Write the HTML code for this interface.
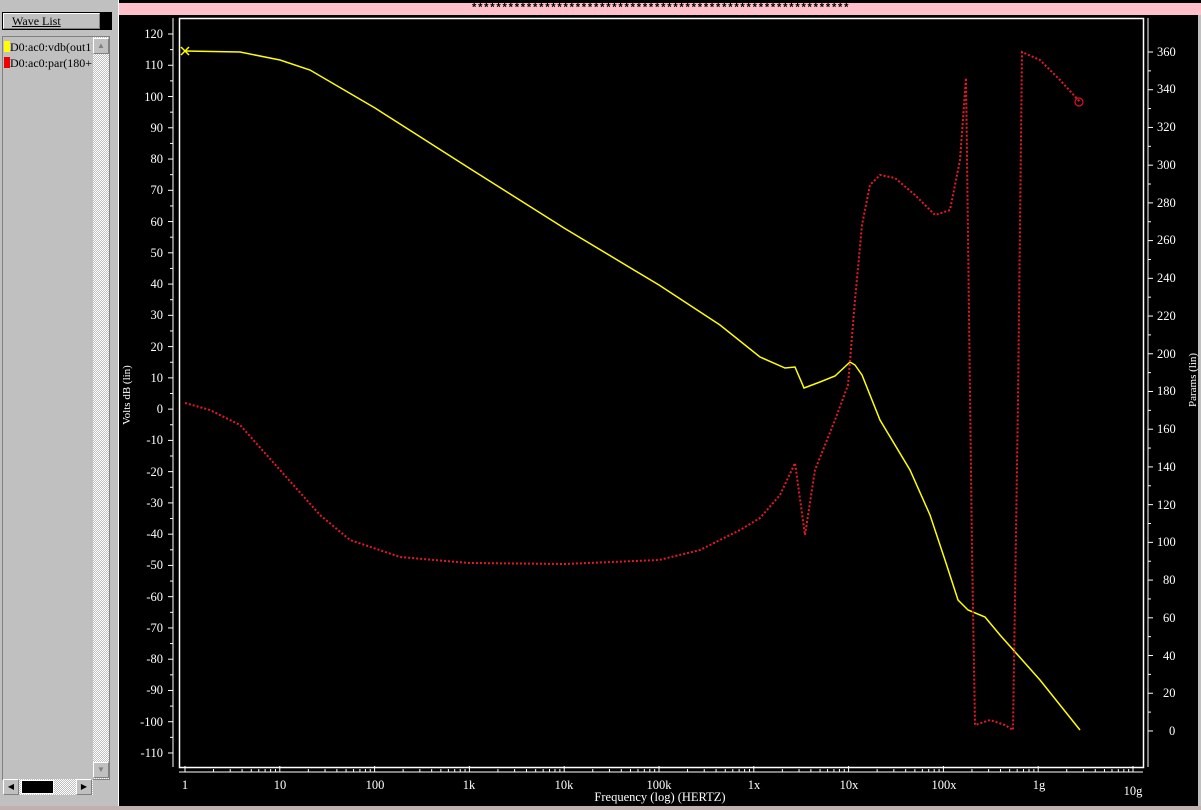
<!DOCTYPE html>
<html><head><meta charset="utf-8"><style>
body{margin:0;width:1201px;height:810px;overflow:hidden;background:#000;font-family:"Liberation Serif",serif;position:relative}
.lp{position:absolute;left:0;top:0;width:118px;height:806px;background:#c0c0c0;border-right:1px solid #fff}
.pk{position:absolute;left:119px;top:3px;width:1082px;height:12px;background:#ffc0cb;font:bold 11px "Liberation Mono",monospace;text-align:center;line-height:12px;color:#000;letter-spacing:-0.5px}
</style></head><body>
<div class="lp">
 <div style="position:absolute;left:2px;top:12px;width:110px;height:18px;background:#000"></div>
 <div style="position:absolute;left:3px;top:13px;width:97px;height:16px;background:#c0c0c0;border:1px solid #fff;border-right-color:#808080;border-bottom-color:#808080;box-sizing:border-box;font-size:12px;line-height:15px;padding-left:8px;text-decoration:underline">Wave List</div>
 <div style="position:absolute;left:2px;top:36px;width:108px;height:744px;background:#c0c0c0;border:1px solid #808080;box-sizing:border-box"></div>
 <div style="position:absolute;left:93px;top:37px;width:16px;height:742px;background:repeating-conic-gradient(#c0c0c0 0 25%,#fff 0 50%) 0 0/2px 2px"></div>
 <div style="position:absolute;left:93px;top:38px;width:16px;height:16px;background:#c0c0c0;border:1px solid #fff;border-right-color:#808080;border-bottom-color:#808080;box-sizing:border-box;font-size:8px;color:#808080;text-align:center;line-height:14px">▲</div>
 <div style="position:absolute;left:93px;top:762px;width:16px;height:16px;background:#c0c0c0;border:1px solid #fff;border-right-color:#808080;border-bottom-color:#808080;box-sizing:border-box;font-size:8px;color:#808080;text-align:center;line-height:14px">▼</div>
 <div style="position:absolute;left:4px;top:39px;width:88px;height:16px;font-size:12px;line-height:16px;white-space:nowrap;overflow:hidden"><span style="display:inline-block;width:6px;height:11px;background:#ff0;vertical-align:-1px"></span>D0:ac0:vdb(out1)</div>
 <div style="position:absolute;left:4px;top:55px;width:88px;height:16px;font-size:12px;line-height:16px;white-space:nowrap;overflow:hidden"><span style="display:inline-block;width:6px;height:11px;background:#e00;vertical-align:-1px"></span>D0:ac0:par(180+v</div>
 <div style="position:absolute;left:3px;top:779px;width:90px;height:16px;background:repeating-conic-gradient(#c0c0c0 0 25%,#fff 0 50%) 0 0/2px 2px"></div>
 <div style="position:absolute;left:3px;top:779px;width:16px;height:16px;background:#c0c0c0;border:1px solid #fff;border-right-color:#808080;border-bottom-color:#808080;box-sizing:border-box;font-size:8px;text-align:center;line-height:14px">◀</div>
 <div style="position:absolute;left:21px;top:780px;width:33px;height:14px;background:#000;border:1px solid #fff;box-sizing:border-box"></div>
 <div style="position:absolute;left:76px;top:779px;width:16px;height:16px;background:#c0c0c0;border:1px solid #fff;border-right-color:#808080;border-bottom-color:#808080;box-sizing:border-box;font-size:8px;text-align:center;line-height:14px">▶</div>
</div>
<div class="pk">**************************************************************</div>
<div style="position:absolute;left:1198px;top:15px;width:3px;height:795px;background:#c0c0c0"></div>
<div style="position:absolute;left:0;top:806px;width:1201px;height:4px;background:#c0b0b0"></div>
<svg style="position:absolute;left:0;top:0" width="1201" height="810" font-family="Liberation Serif" font-size="12.5" fill="#fff">
<rect x="179.5" y="18.5" width="964" height="749" fill="none" stroke="#fff" stroke-width="1.5"/>
<line x1="173" y1="18" x2="173" y2="767" stroke="#fff"/>
<line x1="1148" y1="18" x2="1148" y2="767" stroke="#fff"/>
<line x1="179" y1="772" x2="1143" y2="772" stroke="#fff"/>
<g id="ticks" stroke="#fff"></g>
<g text-anchor="end">
<text x="163" y="38">120</text><text x="163" y="69">110</text><text x="163" y="101">100</text><text x="163" y="132">90</text><text x="163" y="163">80</text><text x="163" y="194">70</text><text x="163" y="226">60</text><text x="163" y="257">50</text><text x="163" y="288">40</text><text x="163" y="319">30</text><text x="163" y="351">20</text><text x="163" y="382">10</text><text x="163" y="413">0</text><text x="163" y="444">-10</text><text x="163" y="476">-20</text><text x="163" y="507">-30</text><text x="163" y="538">-40</text><text x="163" y="569">-50</text><text x="163" y="601">-60</text><text x="163" y="632">-70</text><text x="163" y="663">-80</text><text x="163" y="694">-90</text><text x="163" y="726">-100</text><text x="163" y="757">-110</text>
</g>
<g>
<text x="1157" y="56">360</text><text x="1157" y="93">340</text><text x="1157" y="131">320</text><text x="1157" y="169">300</text><text x="1157" y="207">280</text><text x="1157" y="244">260</text><text x="1157" y="282">240</text><text x="1157" y="320">220</text><text x="1157" y="358">200</text><text x="1157" y="395">180</text><text x="1157" y="433">160</text><text x="1157" y="471">140</text><text x="1157" y="509">120</text><text x="1157" y="546">100</text><text x="1163" y="584">80</text><text x="1163" y="622">60</text><text x="1163" y="660">40</text><text x="1163" y="697">20</text><text x="1169" y="735">0</text>
</g>
<g text-anchor="middle">
<text x="185" y="789">1</text><text x="280" y="789">10</text><text x="375" y="789">100</text><text x="469" y="789">1k</text><text x="564" y="789">10k</text><text x="659" y="789">100k</text><text x="754" y="789">1x</text><text x="849" y="789">10x</text><text x="944" y="789">100x</text><text x="1039" y="789">1g</text><text x="1133" y="795">10g</text>
<text x="660" y="801">Frequency (log) (HERTZ)</text>
</g>
<text transform="translate(130,395) rotate(-90)" text-anchor="middle" font-size="11">Volts dB (lin)</text>
<text transform="translate(1196,380) rotate(-90)" text-anchor="middle" font-size="11">Params (lin)</text>
<polyline fill="none" stroke="#ff0" stroke-width="1.5" points="185,51 240,52 280,60 310,70 375,108 469,168 564,228 659,285 720,325 760,357 785,368 795,367 804,388 820,382 835,376 850,362 855,365 862,375 880,420 910,470 930,515 945,560 958,600 968,610 985,617 1000,635 1040,680 1080,730"/>
<polyline fill="none" stroke="#e81828" stroke-width="2" stroke-dasharray="2,2" points="185,403 210,410 240,425 280,470 320,515 350,540 400,557 469,563 564,564 659,560 700,550 740,530 760,518 780,495 795,463 805,535 815,470 835,420 848,385 855,300 862,225 870,185 880,175 895,178 915,195 935,215 950,210 960,160 966,78 972,550 975,725 990,720 1005,725 1013,730 1018,400 1022,52 1040,60 1060,80 1080,102"/>
<path d="M181,47l8,8M189,47l-8,8" stroke="#ff0" stroke-width="1.5"/>
<circle cx="1079" cy="102" r="4" fill="none" stroke="#e01020" stroke-width="1.2"/>
</svg>
<script>
var g=document.getElementById('ticks'),s='';
for(var i=0;i<=46;i++){var y=34+i*15.63;if(y>767)break;s+='<line x1="'+(i%2?170:168)+'" y1="'+y+'" x2="173" y2="'+y+'"/>';}
for(var i=0;i<=36;i++){var y=52+i*18.86;if(y>767)break;s+='<line x1="1148" y1="'+y+'" x2="'+(i%2?1151:1153)+'" y2="'+y+'"/>';}
for(var d=0;d<10;d++)for(var k=1;k<10;k++){var x=185+(d+Math.log10(k))*94.8;if(x>1143)break;s+='<line x1="'+x+'" y1="772" x2="'+x+'" y2="'+(k==1?766:769)+'"/>';}
s+='<line x1="1133" y1="772" x2="1133" y2="766"/>';
g.innerHTML=s;
</script>
</body></html>
